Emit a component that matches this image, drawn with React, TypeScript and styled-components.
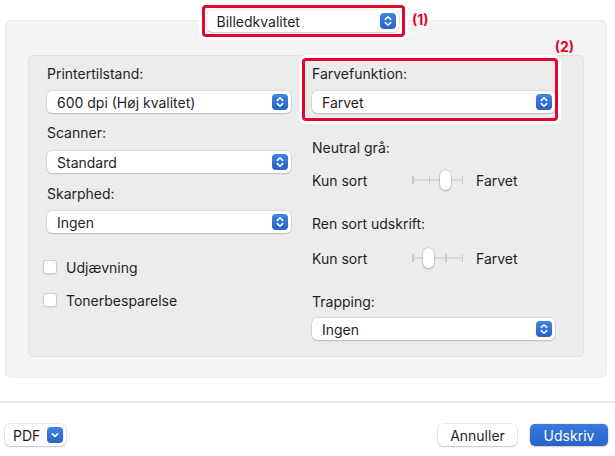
import React from "react";
import styled, { createGlobalStyle } from "styled-components";

const Global = createGlobalStyle`
  html, body { margin: 0; padding: 0; background: #ffffff; }
  body { font-family: Inter, "Noto Sans", "Liberation Sans", sans-serif; font-size: 14px; color: #1f1f1f; }
  * { box-sizing: border-box; }
`;

const RED = "#e1062c";

const Page = styled.div`
  width: 615px;
  height: 456px;
  display: flex;
  flex-direction: column;
  padding-top: 20px;
  background: #ffffff;
  overflow: hidden;
`;

const OuterPanel = styled.div`
  margin: 0 8px 0 5px;
  height: 358px;
  background: #f4f4f4;
  border: 1px solid #ebebeb;
  border-radius: 6px;
  display: flex;
  flex-direction: column;
  padding: 0 22px 0 22px;
`;

const HeaderRow = styled.div`
  display: flex;
  justify-content: center;
  margin-top: -16px;
  padding-right: 6px;
  position: relative;
  z-index: 1;
`;

const Frame = styled.div`
  position: relative;
  border: 3px solid ${RED};
  border-radius: 4px;
  box-shadow: 0 0 0 3px #ffffff;
`;

const TopFrame = styled(Frame)`
  width: 203px;
  height: 32px;
  padding: 2px 3px 2px 2px;
  background: #ffffff;
`;

const Note = styled.span<{ $top: number; $right: number }>`
  position: absolute;
  top: ${(p) => p.$top}px;
  right: ${(p) => p.$right}px;
  color: ${RED};
  font-weight: 700;
  font-size: 14px;
  line-height: 16px;
  white-space: nowrap;
`;

const InnerPanel = styled.div`
  margin-top: 18px;
  height: 302px;
  background: #ececec;
  border: 1px solid #e2e2e2;
  border-radius: 5px;
  display: grid;
  grid-template-columns: 244px 243px;
  column-gap: 21px;
  padding: 2px 0 0 18px;
`;

const Column = styled.div<{ $pt: number }>`
  display: flex;
  flex-direction: column;
  padding-top: ${(p) => p.$pt}px;
`;

const Label = styled.div<{ $mt?: number }>`
  height: 16px;
  line-height: 16px;
  margin-top: ${(p) => p.$mt ?? 0}px;
  white-space: nowrap;
`;

const Popup = styled.div<{ $mt?: number; $w?: number }>`
  margin-top: ${(p) => p.$mt ?? 9}px;
  width: ${(p) => (p.$w ? `${p.$w}px` : "100%")};
  height: 22px;
  flex-shrink: 0;
  display: flex;
  align-items: center;
  justify-content: space-between;
  padding: 0 3px 0 10px;
  background: #ffffff;
  border-radius: 5px;
  box-shadow: 0 0 0 0.5px rgba(0, 0, 0, 0.14), 0 1px 1.5px rgba(0, 0, 0, 0.14);
  white-space: nowrap;
`;

const ColorFrame = styled(Frame)`
  margin-left: -10px;
  margin-right: -3px;
  height: 63px;
  padding: 5px 0 0 7px;
  background: #ececec;
`;

const Clip = styled.div`
  overflow: hidden;
  display: flex;
  flex-direction: column;
  height: 100%;
  padding-left: 1px;
  margin-left: -1px;
`;

const CheckRow = styled.label<{ $mt: number }>`
  display: flex;
  align-items: center;
  gap: 9px;
  margin-left: -4px;
  margin-top: ${(p) => p.$mt}px;
  height: 18px;
`;

const Box = styled.span`
  width: 14px;
  height: 14px;
  border-radius: 3px;
  background: #ffffff;
  border: 1px solid #cdcdcd;
  box-shadow: 0 0.5px 1px rgba(0, 0, 0, 0.08);
`;

const SliderRow = styled.div<{ $mt: number }>`
  display: grid;
  grid-template-columns: 87px 51px auto;
  column-gap: 13px;
  align-items: center;
  height: 22px;
  margin-top: ${(p) => p.$mt}px;
`;

const Track = styled.div`
  position: relative;
  height: 22px;
  display: flex;
  align-items: center;
  justify-content: space-between;
`;

const Line = styled.div`
  position: absolute;
  left: 0;
  right: 0;
  top: 10px;
  height: 2px;
  background: #dadada;
`;

const Tick = styled.span`
  width: 1.5px;
  height: 8px;
  background: #cbcbcb;
  position: relative;
`;

const Thumb = styled.span`
  position: absolute;
  top: 1px;
  width: 11px;
  height: 20px;
  margin-left: -5.5px;
  border-radius: 5.5px;
  background: #ffffff;
  box-shadow: 0 0 0 0.5px rgba(0, 0, 0, 0.18), 0 1px 2px rgba(0, 0, 0, 0.25);
`;

const Separator = styled.div`
  margin-top: 23px;
  height: 2px;
  background: #e9e9e9;
`;

const Footer = styled.div`
  display: flex;
  align-items: center;
  margin-top: 21px;
  padding: 0 7px 0 5px;
  gap: 13px;
`;

const Button = styled.div<{ $primary?: boolean; $w: number }>`
  width: ${(p) => p.$w}px;
  height: 22px;
  display: flex;
  align-items: center;
  justify-content: center;
  border-radius: 5px;
  background: ${(p) => (p.$primary ? "linear-gradient(#3a7be0, #2563c8)" : "#ffffff")};
  color: ${(p) => (p.$primary ? "#ffffff" : "#1f1f1f")};
  box-shadow: ${(p) =>
    p.$primary
      ? "0 0 0 0.5px rgba(0,0,0,0.12), 0 1px 1.5px rgba(0,0,0,0.15)"
      : "0 0 0 0.5px rgba(0,0,0,0.16), 0 1px 1.5px rgba(0,0,0,0.16)"};
`;

const PdfButton = styled(Button)`
  justify-content: space-between;
  padding: 0 3px 0 8px;
  margin-right: auto;
`;

const Stepper = () => (
  <svg width="16" height="16" viewBox="0 0 16 16">
    <defs>
      <linearGradient id="stg" x1="0" y1="0" x2="0" y2="1">
        <stop offset="0" stopColor="#3f84e6" />
        <stop offset="1" stopColor="#2862c4" />
      </linearGradient>
    </defs>
    <rect x="0" y="0" width="16" height="16" rx="4" fill="url(#stg)" />
    <path d="M5.3 6.4 L8 3.8 L10.7 6.4" fill="none" stroke="#fff" strokeWidth="1.5" strokeLinecap="round" strokeLinejoin="round" />
    <path d="M5.3 9.6 L8 12.2 L10.7 9.6" fill="none" stroke="#fff" strokeWidth="1.5" strokeLinecap="round" strokeLinejoin="round" />
  </svg>
);

const DownBox = () => (
  <svg width="16" height="16" viewBox="0 0 16 16">
    <rect x="0" y="0" width="16" height="16" rx="4" fill="url(#stg)" />
    <path d="M5.3 6.8 L8 9.4 L10.7 6.8" fill="none" stroke="#fff" strokeWidth="1.6" strokeLinecap="round" strokeLinejoin="round" />
  </svg>
);

const Select = ({ value, mt, w }: { value: string; mt?: number; w?: number }) => (
  <Popup $mt={mt} $w={w}>
    <span>{value}</span>
    <Stepper />
  </Popup>
);

const Slider = ({ pos }: { pos: number }) => (
  <Track>
    <Line />
    {[0, 1, 2, 3].map((i) => (
      <Tick key={i} />
    ))}
    <Thumb style={{ left: `${(pos / 3) * 100}%` }} />
  </Track>
);

export default function App() {
  return (
    <>
      <Global />
      <Page>
        <OuterPanel>
          <HeaderRow>
            <TopFrame>
              <Select value="Billedkvalitet" mt={0} />
              <Note $top={4} $right={-27}>(1)</Note>
            </TopFrame>
          </HeaderRow>
          <InnerPanel>
            <Column $pt={8}>
              <Label>Printertilstand:</Label>
              <Select value="600 dpi (Høj kvalitet)" />
              <Label $mt={12}>Scanner:</Label>
              <Select value="Standard" mt={10} />
              <Label $mt={13}>Skarphed:</Label>
              <Select value="Ingen" />
              <CheckRow $mt={25}>
                <Box />
                <span>Udjævning</span>
              </CheckRow>
              <CheckRow $mt={15}>
                <Box />
                <span>Tonerbesparelse</span>
              </CheckRow>
            </Column>
            <Column $pt={0}>
              <ColorFrame>
                <Note $top={-22} $right={-19}>(2)</Note>
                <Clip>
                  <Label>Farvefunktion:</Label>
                  <Select value="Farvet" w={243} />
                </Clip>
              </ColorFrame>
              <Label $mt={19}>Neutral grå:</Label>
              <SliderRow $mt={13}>
                <span>Kun sort</span>
                <Slider pos={2} />
                <span>Farvet</span>
              </SliderRow>
              <Label $mt={25}>Ren sort udskrift:</Label>
              <SliderRow $mt={15}>
                <span>Kun sort</span>
                <Slider pos={1} />
                <span>Farvet</span>
              </SliderRow>
              <Label $mt={25}>Trapping:</Label>
              <Select value="Ingen" mt={8} />
            </Column>
          </InnerPanel>
        </OuterPanel>
        <Separator />
        <Footer>
          <PdfButton $w={61}>
            <span>PDF</span>
            <DownBox />
          </PdfButton>
          <Button $w={79}>Annuller</Button>
          <Button $w={78} $primary>
            Udskriv
          </Button>
        </Footer>
      </Page>
    </>
  );
}
